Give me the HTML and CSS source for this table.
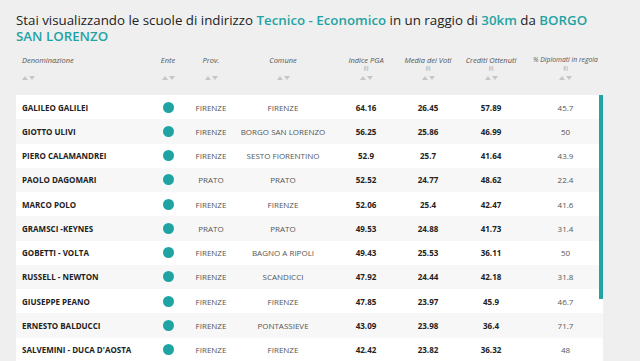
FILE: index.html
```html
<!DOCTYPE html>
<html lang="it">
<head>
<meta charset="utf-8">
<title>Scuole</title>
<link rel="stylesheet" href="styles.css">
</head>
<body>
<div class="page">
  <h1 class="title">Stai visualizzando le scuole di indirizzo <span class="hl">Tecnico - Economico</span> in un raggio di <span class="hl">30km</span> da <span class="hl">BORGO</span> <span class="hl">SAN LORENZO</span></h1>
  <div class="head grid">
    <div class="th left"><span class="lbl">Denominazione</span><span class="info"></span><span class="sort"><i class="up"></i><i class="down"></i></span></div>
    <div class="th"><span class="lbl">Ente</span><span class="info"></span><span class="sort"><i class="up"></i><i class="down"></i></span></div>
    <div class="th"><span class="lbl">Prov.</span><span class="info"></span><span class="sort"><i class="up"></i><i class="down"></i></span></div>
    <div class="th"><span class="lbl">Comune</span><span class="info"></span><span class="sort"><i class="up"></i><i class="down"></i></span></div>
    <div class="th"><span class="lbl">Indice PGA</span><span class="info">(i)</span><span class="sort"><i class="up"></i><i class="down"></i></span></div>
    <div class="th"><span class="lbl">Media dei Voti</span><span class="info">(i)</span><span class="sort"><i class="up"></i><i class="down"></i></span></div>
    <div class="th"><span class="lbl">Crediti Ottenuti</span><span class="info">(i)</span><span class="sort"><i class="up"></i><i class="down"></i></span></div>
    <div class="th"><span class="lbl small">% Diplomati in regola</span><span class="info">(i)</span><span class="sort"><i class="up"></i><i class="down"></i></span></div>
  </div>
  <div class="table">
    <div class="scrollbar"></div>
    <div class="row grid"><div class="name">GALILEO GALILEI</div><div class="c"><span class="dot"></span></div><div class="c reg">FIRENZE</div><div class="c reg">FIRENZE</div><div class="c num">64.16</div><div class="c num">26.45</div><div class="c num">57.89</div><div class="c reg">45.7</div></div>
    <div class="row grid"><div class="name">GIOTTO ULIVI</div><div class="c"><span class="dot"></span></div><div class="c reg">FIRENZE</div><div class="c reg">BORGO SAN LORENZO</div><div class="c num">56.25</div><div class="c num">25.86</div><div class="c num">46.99</div><div class="c reg">50</div></div>
    <div class="row grid"><div class="name">PIERO CALAMANDREI</div><div class="c"><span class="dot"></span></div><div class="c reg">FIRENZE</div><div class="c reg">SESTO FIORENTINO</div><div class="c num">52.9</div><div class="c num">25.7</div><div class="c num">41.64</div><div class="c reg">43.9</div></div>
    <div class="row grid"><div class="name">PAOLO DAGOMARI</div><div class="c"><span class="dot"></span></div><div class="c reg">PRATO</div><div class="c reg">PRATO</div><div class="c num">52.52</div><div class="c num">24.77</div><div class="c num">48.62</div><div class="c reg">22.4</div></div>
    <div class="row grid"><div class="name">MARCO POLO</div><div class="c"><span class="dot"></span></div><div class="c reg">FIRENZE</div><div class="c reg">FIRENZE</div><div class="c num">52.06</div><div class="c num">25.4</div><div class="c num">42.47</div><div class="c reg">41.6</div></div>
    <div class="row grid"><div class="name">GRAMSCI -KEYNES</div><div class="c"><span class="dot"></span></div><div class="c reg">PRATO</div><div class="c reg">PRATO</div><div class="c num">49.53</div><div class="c num">24.88</div><div class="c num">41.73</div><div class="c reg">31.4</div></div>
    <div class="row grid"><div class="name">GOBETTI - VOLTA</div><div class="c"><span class="dot"></span></div><div class="c reg">FIRENZE</div><div class="c reg">BAGNO A RIPOLI</div><div class="c num">49.43</div><div class="c num">25.53</div><div class="c num">36.11</div><div class="c reg">50</div></div>
    <div class="row grid"><div class="name">RUSSELL - NEWTON</div><div class="c"><span class="dot"></span></div><div class="c reg">FIRENZE</div><div class="c reg">SCANDICCI</div><div class="c num">47.92</div><div class="c num">24.44</div><div class="c num">42.18</div><div class="c reg">31.8</div></div>
    <div class="row grid"><div class="name">GIUSEPPE PEANO</div><div class="c"><span class="dot"></span></div><div class="c reg">FIRENZE</div><div class="c reg">FIRENZE</div><div class="c num">47.85</div><div class="c num">23.97</div><div class="c num">45.9</div><div class="c reg">46.7</div></div>
    <div class="row grid"><div class="name">ERNESTO BALDUCCI</div><div class="c"><span class="dot"></span></div><div class="c reg">FIRENZE</div><div class="c reg">PONTASSIEVE</div><div class="c num">43.09</div><div class="c num">23.98</div><div class="c num">36.4</div><div class="c reg">71.7</div></div>
    <div class="row grid"><div class="name">SALVEMINI - DUCA D'AOSTA</div><div class="c"><span class="dot"></span></div><div class="c reg">FIRENZE</div><div class="c reg">FIRENZE</div><div class="c num">42.42</div><div class="c num">23.82</div><div class="c num">36.32</div><div class="c reg">48</div></div>
  </div>
</div>
</body>
</html>
```
FILE: styles.css
```css
html, body {
  margin: 0;
  padding: 0;
  background: #efefef;
  overflow: hidden;
}
.page {
  font-family: "Open Sans", "Liberation Sans", sans-serif;
  padding: 12px 0 0 16px;
  width: 587px;
}
.title {
  margin: 0;
  font-size: 13.3px;
  line-height: 16px;
  font-weight: 400;
  color: #222;
}
.hl {
  color: #1fa3a3;
  font-weight: 600;
}
.grid {
  display: grid;
  grid-template-columns: 134px 36px 50px 94px 72px 52px 74px 75px;
}
.head {
  margin-top: 11px;
  height: 40px;
}
.th {
  display: flex;
  flex-direction: column;
  align-items: center;
  font-style: italic;
  color: #555;
}
.th.left {
  align-items: flex-start;
  padding-left: 6px;
}
.lbl {
  font-size: 7.5px;
  line-height: 10px;
  white-space: nowrap;
}
.lbl.small {
  font-size: 6.8px;
}
.info {
  font-size: 5px;
  line-height: 6px;
  height: 6px;
  color: #888;
  font-style: normal;
}
.sort {
  display: flex;
  gap: 1px;
  margin-top: 5px;
}
.sort i {
  width: 0;
  height: 0;
  border-left: 3px solid transparent;
  border-right: 3px solid transparent;
}
.sort .up {
  border-bottom: 4px solid #c6c6c6;
}
.sort .down {
  border-top: 4px solid #c6c6c6;
}
.table {
  position: relative;
  background: #fff;
}
.scrollbar {
  position: absolute;
  right: 0;
  top: 0;
  width: 4px;
  height: 204px;
  background: #1fa3a3;
}
.row {
  height: 24.25px;
  align-items: center;
  font-size: 8px;
}
.row:nth-child(odd) {
  background: #f7f7f7;
}
.name {
  padding-left: 6px;
  font-weight: 700;
  color: #222;
  white-space: nowrap;
}
.c {
  text-align: center;
  white-space: nowrap;
  display: flex;
  justify-content: center;
}
.reg {
  color: #555;
  font-weight: 400;
}
.num {
  color: #222;
  font-weight: 700;
}
.dot {
  width: 11px;
  height: 11px;
  border-radius: 50%;
  background: #1fa3a3;
}
```
